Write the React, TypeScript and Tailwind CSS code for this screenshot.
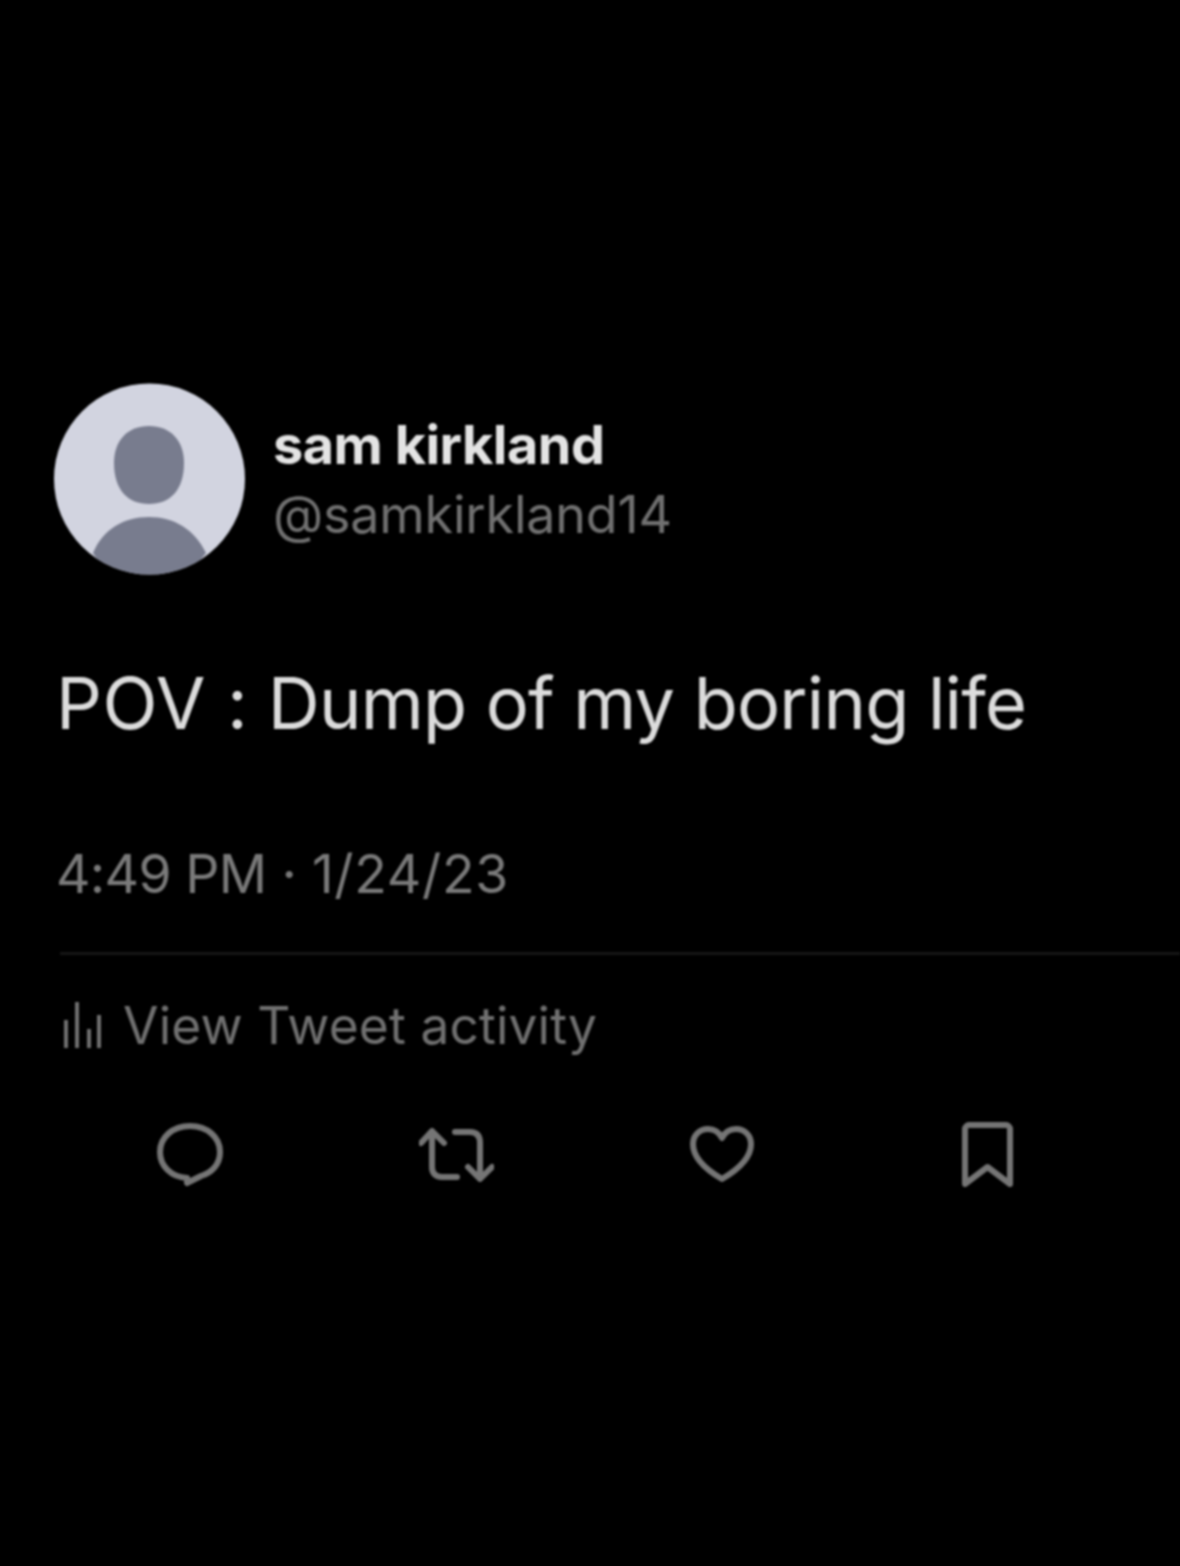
const FONT = "font-['Inter','Liberation_Sans',sans-serif]";

function Avatar() {
  return (
    <svg width="191" height="192" viewBox="0 0 191 192" className="shrink-0">
      <defs>
        <clipPath id="avatar-clip">
          <circle cx="95.5" cy="96" r="95.5" />
        </clipPath>
      </defs>
      <circle cx="95.500" cy="96" r="95.500" fill="#d2d4e0" />
      <g clipPath="url(#avatar-clip)" fill="#787c8e">
        <path d="M95 43c21 0 35 14 35 37 0 27-14 41-35 41S60 107 60 80c0-23 14-37 35-37z" />
        <path d="M39 170c10-24 31-36 56-36s45 12 57 36l-20 25H55z" />
      </g>
    </svg>
  );
}

function ChartIcon() {
  return (
    <svg width="40" height="48" viewBox="0 0 40 48" fill="#707070" className="shrink-0">
      <rect x="1" y="19" width="4" height="28" />
      <rect x="12" y="1" width="4" height="46" />
      <rect x="24" y="28" width="4" height="19" />
      <rect x="34" y="14" width="4" height="33" />
    </svg>
  );
}

function ReplyIcon() {
  return (
    <svg width="66" height="64" viewBox="0 0 66 64" fill="none" stroke="#757575" strokeWidth="6" strokeLinejoin="round">
      <path d="M33 3C50 3 63 14 63 29 63 42 54 50 44 53L30 60V55C14 54 3 43 3 29 3 14 16 3 33 3z" />
    </svg>
  );
}

function RetweetIcon() {
  return (
    <svg width="75" height="54" viewBox="0 0 75 54" fill="none" stroke="#757575" strokeWidth="6" strokeLinecap="round" strokeLinejoin="round">
      <path d="M2 15 13 3l12 12" />
      <path d="M13 4v35c0 6 3 10 10 10h15" />
      <path d="M73 39 61 51 49 39" />
      <path d="M61 50V15c0-7-3-11-10-11H36" />
    </svg>
  );
}

function HeartIcon() {
  return (
    <svg width="64" height="57" viewBox="0 0 64 57" fill="none" stroke="#757575" strokeWidth="6" strokeLinejoin="round">
      <path d="M32 53C20 46 3 34 3 18 3 9 10 3 18 3c6 0 11 3 14 9 3-6 8-9 14-9 8 0 15 6 15 15 0 16-17 28-29 35z" />
    </svg>
  );
}

function BookmarkIcon() {
  return (
    <svg width="51" height="65" viewBox="0 0 51 65" fill="none" stroke="#757575" strokeWidth="6" strokeLinejoin="round">
      <path d="M3 62V7c0-2 2-4 4-4h37c2 0 4 2 4 4v55L25.500 45z" />
    </svg>
  );
}

export default function App() {
  return (
    <div className={`${FONT} min-h-[1566px] bg-black pt-[383px] overflow-hidden`}>
      <div className="blur-[1px]">
        <div className="flex items-center gap-[28px] pl-[54px]">
          <Avatar />
          <div className="flex flex-col pt-[2px]">
            <span className="text-[54px] leading-[70px] font-bold tracking-[-0.5px] text-[#e4e4e4]">sam kirkland</span>
            <span className="text-[52px] leading-[70px] tracking-[-0.2px] text-[#707070]">@samkirkland14</span>
          </div>
        </div>

        <p className="mt-[78px] pl-[56px] text-[72px] leading-[100px] tracking-[-0.8px] text-[#dcdcdc]">
          <span className="tracking-[0.6px]">POV :</span> Dump of my boring life
        </p>

        <p className="mt-[86px] pl-[56px] text-[53.500px] leading-[70px] text-[#7a7a7a]">
          <span className="tracking-[-0.7px]">4:49 PM</span> · <span className="tracking-[0.7px]">1/24/23</span>
        </p>

        <div className="mt-[43px] ml-[60px] h-[3px] bg-[#161616]" />

        <div className="mt-[44px] flex items-center gap-[20px] pl-[63px]">
          <ChartIcon />
          <span className="text-[51.500px] leading-[52px] tracking-[0.1px] text-[#707070]">View Tweet activity</span>
        </div>

        <div className="mt-[71px] flex items-center gap-[196px] pl-[157px]">
          <ReplyIcon />
          <RetweetIcon />
          <div className="flex items-center gap-[208px]">
            <HeartIcon />
            <BookmarkIcon />
          </div>
        </div>
      </div>
    </div>
  );
}
